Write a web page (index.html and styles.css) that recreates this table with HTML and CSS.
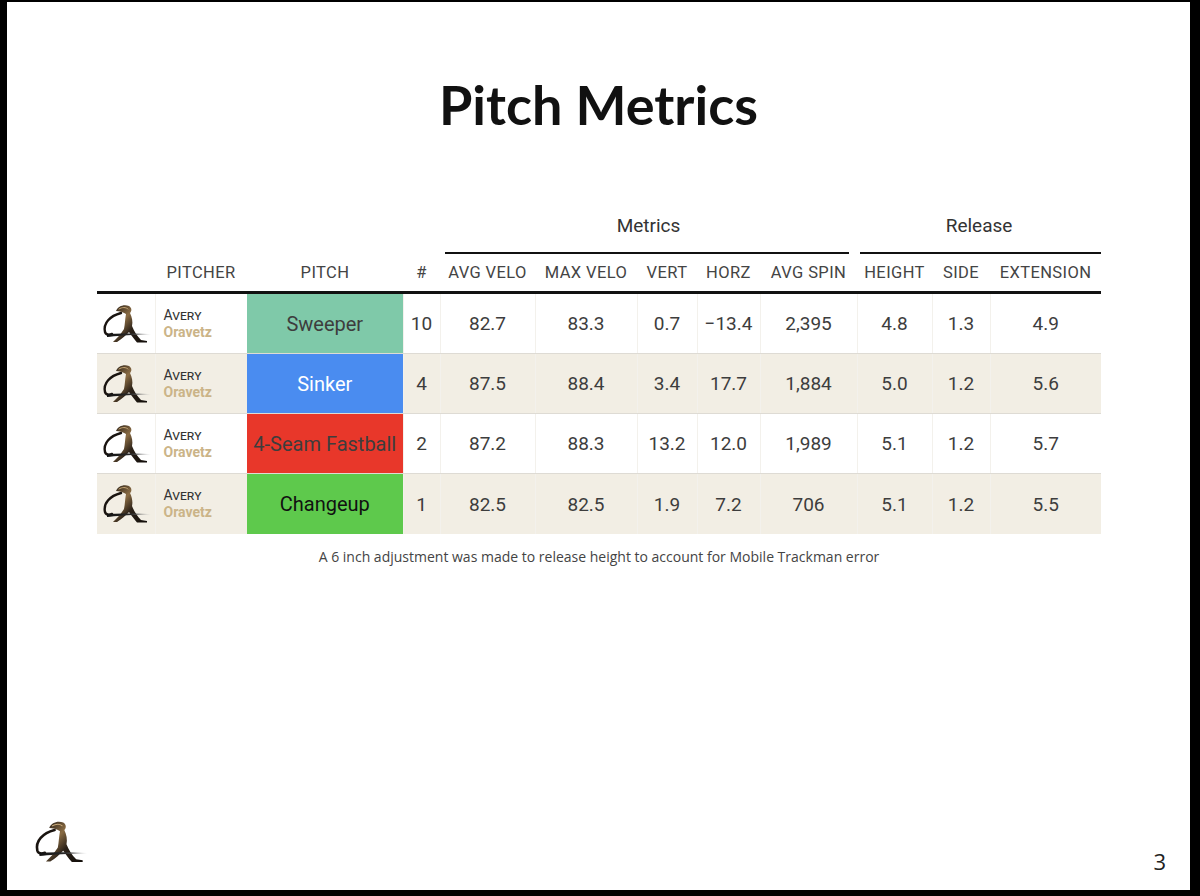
FILE: index.html
```html
<!DOCTYPE html>
<html>
<head>
<meta charset="utf-8">
<link rel="stylesheet" href="styles.css">
</head>
<body>
<svg width="0" height="0" class="defs">
  <defs>
    <linearGradient id="fig" x1="0" y1="0" x2="1" y2="1">
      <stop offset="0" stop-color="#1e1712"/>
      <stop offset="0.35" stop-color="#8a6c44"/>
      <stop offset="0.6" stop-color="#2b2118"/>
      <stop offset="1" stop-color="#110d09"/>
    </linearGradient>
    <linearGradient id="tail" x1="0" y1="0" x2="1" y2="0">
      <stop offset="0" stop-color="#111"/>
      <stop offset="0.55" stop-color="#2a2a2a"/>
      <stop offset="1" stop-color="#bbb" stop-opacity="0"/>
    </linearGradient>
    <symbol id="logo" viewBox="0 0 50 40">
      <path d="M20 9 C 9 12, 2 19, 4 28 C 5 31, 8 31, 11 30" fill="none" stroke="#1a1410" stroke-width="2.4" stroke-linecap="round"/>
      <path d="M15 7 C 17 2, 23 0, 28 2 C 31 4, 31 7, 29 9 C 31 13, 32 18, 31 22 C 33 27, 36 32, 40 36 L 46 37 L 46 38.5 L 36 38.5 C 33 35, 30 31, 28 28 C 25 31, 21 35, 16 38 L 12 38 C 16 34, 20 30, 23 25 C 24 20, 24 15, 25 10 C 22 8, 18 7, 15 7 Z" fill="url(#fig)"/>
      <path d="M18 5 C 21 3, 25 3, 27 5" fill="none" stroke="#c9a978" stroke-width="1" stroke-linecap="round"/>
      <path d="M6 30 C 16 29.5, 28 29.5, 38 29.5 C 42 29.5, 46 29.8, 50 30.2 L 50 31.2 C 42 31, 32 31, 22 31.5 C 15 32, 10 32.5, 6 33 Z" fill="url(#tail)"/>
    </symbol>
  </defs>
</svg>
<div class="slide">
  <h1 class="title">Pitch Metrics</h1>
  <div class="table-wrap">
    <table class="metrics">
      <colgroup>
        <col class="c-logo"><col class="c-pitcher"><col class="c-pitch"><col class="c-num">
        <col class="c-avg"><col class="c-max"><col class="c-vert"><col class="c-horz"><col class="c-spin">
        <col class="c-height"><col class="c-side"><col class="c-ext">
      </colgroup>
      <thead>
        <tr class="group-row">
          <th colspan="4"></th>
          <th colspan="5" class="group"><span class="group-label">Metrics</span><span class="group-line metrics-line"></span></th>
          <th colspan="3" class="group"><span class="group-label">Release</span><span class="group-line release-line"></span></th>
        </tr>
        <tr class="head-row">
          <th></th><th>PITCHER</th><th>PITCH</th><th>#</th>
          <th>AVG VELO</th><th>MAX VELO</th><th>VERT</th><th>HORZ</th><th>AVG SPIN</th>
          <th>HEIGHT</th><th>SIDE</th><th>EXTENSION</th>
        </tr>
      </thead>
      <tbody>
        <tr>
          <td class="logo-cell"><svg class="row-logo"><use href="#logo"/></svg></td>
          <td class="pitcher"><span class="first">Avery</span><span class="last">Oravetz</span></td>
          <td class="pitch sweeper">Sweeper</td>
          <td>10</td><td>82.7</td><td>83.3</td><td>0.7</td><td>−13.4</td><td>2,395</td><td>4.8</td><td>1.3</td><td>4.9</td>
        </tr>
        <tr class="alt">
          <td class="logo-cell"><svg class="row-logo"><use href="#logo"/></svg></td>
          <td class="pitcher"><span class="first">Avery</span><span class="last">Oravetz</span></td>
          <td class="pitch sinker">Sinker</td>
          <td>4</td><td>87.5</td><td>88.4</td><td>3.4</td><td>17.7</td><td>1,884</td><td>5.0</td><td>1.2</td><td>5.6</td>
        </tr>
        <tr>
          <td class="logo-cell"><svg class="row-logo"><use href="#logo"/></svg></td>
          <td class="pitcher"><span class="first">Avery</span><span class="last">Oravetz</span></td>
          <td class="pitch fastball">4-Seam Fastball</td>
          <td>2</td><td>87.2</td><td>88.3</td><td>13.2</td><td>12.0</td><td>1,989</td><td>5.1</td><td>1.2</td><td>5.7</td>
        </tr>
        <tr class="alt">
          <td class="logo-cell"><svg class="row-logo"><use href="#logo"/></svg></td>
          <td class="pitcher"><span class="first">Avery</span><span class="last">Oravetz</span></td>
          <td class="pitch changeup">Changeup</td>
          <td>1</td><td>82.5</td><td>82.5</td><td>1.9</td><td>7.2</td><td>706</td><td>5.1</td><td>1.2</td><td>5.5</td>
        </tr>
      </tbody>
    </table>
    <p class="note">A 6 inch adjustment was made to release height to account for Mobile Trackman error</p>
  </div>
  <div class="footer">
    <svg class="foot-logo"><use href="#logo"/></svg>
    <span class="page-num">3</span>
  </div>
</div>
</body>
</html>
```
FILE: styles.css
```css
html, body {
  margin: 0;
  padding: 0;
  background: #000;
}
body {
  width: 1200px;
  height: 896px;
  overflow: hidden;
}
.defs {
  position: absolute;
}
.slide {
  margin: 2px 0 0 7px;
  width: 1183px;
  height: 888px;
  background: #fff;
  display: flex;
  flex-direction: column;
  font-family: Roboto, "Open Sans", sans-serif;
  color: #333;
}
.title {
  margin: 0;
  padding-top: 73px;
  height: 198px;
  box-sizing: border-box;
  text-align: center;
  font-family: Lato, "Open Sans", sans-serif;
  font-weight: 700;
  font-size: 54px;
  line-height: 60px;
  color: #111;
}
.table-wrap {
  margin-left: 90px;
  width: 1004px;
}
.metrics {
  border-collapse: collapse;
  table-layout: fixed;
  width: 1004px;
}
.c-logo { width: 58px; }
.c-pitcher { width: 92px; }
.c-pitch { width: 156px; }
.c-num { width: 37px; }
.c-avg { width: 95px; }
.c-max { width: 102px; }
.c-vert { width: 60px; }
.c-horz { width: 63px; }
.c-spin { width: 97px; }
.c-height { width: 75px; }
.c-side { width: 58px; }
.c-ext { width: 111px; }

.metrics th {
  font-weight: 400;
  padding: 0;
}
.group-row th {
  height: 54px;
  vertical-align: bottom;
}
.group {
  text-align: center;
}
.group-label {
  display: block;
  font-size: 19px;
  color: #333;
  line-height: 22px;
  padding-bottom: 15px;
}
.group-line {
  display: block;
  height: 2px;
  background: #111;
}
.metrics-line {
  margin: 0 8px 0 5px;
}
.release-line {
  margin: 0 0 0 3px;
}
.head-row th {
  height: 37px;
  font-size: 16.5px;
  letter-spacing: 0.4px;
  color: #444;
  text-align: center;
  border-bottom: 3px solid #111;
  vertical-align: middle;
  white-space: nowrap;
}
.metrics td {
  height: 59px;
  padding: 0;
  text-align: center;
  vertical-align: middle;
  font-size: 19px;
  color: #3d3d3d;
  border-bottom: 1px solid #dedbd4;
  border-left: 1px solid #f3f1ec;
}
.metrics td:first-child {
  border-left: none;
}
.metrics tbody tr:last-child td {
  border-bottom: none;
  height: 60px;
}
.alt td {
  background: #f2eee4;
}
.row-logo {
  width: 50px;
  height: 40px;
  display: block;
  margin: 0 0 0 4px;
}
.pitcher {
  text-align: left !important;
  padding-left: 8px !important;
  line-height: 17px;
}
.pitcher .first {
  display: block;
  font-variant: small-caps;
  font-size: 14px;
  color: #333;
}
.pitcher .last {
  display: block;
  font-weight: 700;
  font-size: 14px;
  color: #cbb488;
}
.metrics td.pitch {
  font-size: 20px;
  border-left: none;
}
.alt td.sinker,
.sinker {
  background: #4a8cf0;
  color: #fff;
}
.sweeper {
  background: #7fc9a9;
  color: #1a1a1a;
}
.fastball {
  background: #e8372a;
  color: #fff;
}
.alt td.changeup,
.changeup {
  background: #5ec94c;
  color: #111;
}
.note {
  margin: 0;
  height: 47px;
  line-height: 46px;
  text-align: center;
  font-family: "Open Sans", sans-serif;
  font-size: 14px;
  color: #444;
}
.footer {
  margin-top: auto;
  display: flex;
  justify-content: space-between;
  align-items: flex-end;
  padding: 0 24px 16px 26px;
}
.foot-logo {
  width: 54px;
  height: 44px;
  display: block;
  margin-bottom: 10px;
}
.page-num {
  font-family: "Open Sans", sans-serif;
  font-size: 22px;
  color: #222;
  line-height: 26px;
}
```
